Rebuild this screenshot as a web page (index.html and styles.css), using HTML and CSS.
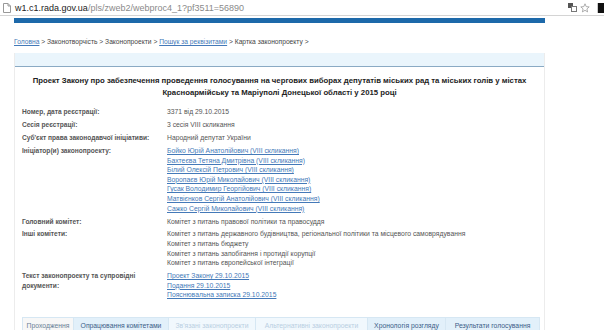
FILE: index.html
```html
<!DOCTYPE html>
<html lang="uk">
<head>
    <meta charset="UTF-8">
    <meta name="viewport" content="width=device-width, initial-scale=1.0">
    <title>Картка законопроекту</title>
    <link rel="stylesheet" href="styles.css">
</head>
<body>

    <div class="chrome">
        <svg class="page-icon" width="8" height="10" viewBox="0 0 8 10">
            <path d="M0.5 0.5h4.5l2.5 2.5v6.5h-7z M5 0.5v2.5h2.5" fill="#fff" stroke="#999" stroke-width="1"/>
        </svg>
        <div class="url"><span class="host">w1.c1.rada.gov.ua</span>/pls/zweb2/webproc4_1?pf3511=56890</div>
        <div class="chrome-icons">
            <svg width="9" height="9" viewBox="0 0 9 9">
                <rect x="0" y="0" width="5" height="5" fill="#555"/>
                <rect x="3.5" y="3.5" width="5" height="5" fill="#fff" stroke="#777" stroke-width="1"/>
            </svg>
            <svg width="10" height="10" viewBox="0 0 10 10">
                <path d="M5 0.8l1.2 2.8 3 .3-2.3 2 .7 3-2.6-1.6-2.6 1.6.7-3-2.3-2 3-.3z" fill="none" stroke="#999" stroke-width="0.8"/>
            </svg>
            <div class="ext"></div>
        </div>
    </div>

    <div class="page">
        <div class="topbar"></div>

        <div class="crumbs">
            <a href="#">Головна</a> &gt; Законотворчість &gt; Законопроекти &gt; <a href="#">Пошук за реквізитами</a> &gt; Картка законопроекту &gt;
        </div>

        <div class="panel">
            <div class="panel-head"></div>

            <h1 class="title">Проект Закону про забезпечення проведення голосування на чергових виборах депутатів міських рад та міських голів у містах Красноармійську та Маріуполі Донецької області у 2015 році</h1>

            <div class="rows">
                <div class="label">Номер, дата реєстрації:</div>
                <div class="value">3371 від 29.10.2015</div>

                <div class="label">Сесія реєстрації:</div>
                <div class="value">3 сесія VIII скликання</div>

                <div class="label">Суб'єкт права законодавчої ініціативи:</div>
                <div class="value">Народний депутат України</div>

                <div class="label">Ініціатор(и) законопроекту:</div>
                <div class="value">
                    <a href="#">Бойко Юрій Анатолійович (VIII скликання)</a><br>
                    <a href="#">Бахтеєва Тетяна Дмитрівна (VIII скликання)</a><br>
                    <a href="#">Білий Олексій Петрович (VIII скликання)</a><br>
                    <a href="#">Воропаєв Юрій Миколайович (VIII скликання)</a><br>
                    <a href="#">Гусак Володимир Георгійович (VIII скликання)</a><br>
                    <a href="#">Матвієнков Сергій Анатолійович (VIII скликання)</a><br>
                    <a href="#">Сажко Сергій Миколайович (VIII скликання)</a>
                </div>

                <div class="label">Головний комітет:</div>
                <div class="value">Комітет з питань правової політики та правосуддя</div>

                <div class="label">Інші комітети:</div>
                <div class="value">
                    Комітет з питань державного будівництва, регіональної політики та місцевого самоврядування<br>
                    Комітет з питань бюджету<br>
                    Комітет з питань запобігання і протидії корупції<br>
                    Комітет з питань європейської інтеграції
                </div>

                <div class="label">Текст законопроекту та супровідні<br>документи:</div>
                <div class="value">
                    <a href="#">Проект Закону 29.10.2015</a><br>
                    <a href="#">Подання 29.10.2015</a><br>
                    <a href="#">Пояснювальна записка 29.10.2015</a>
                </div>
            </div>

            <div class="tabs">
                <div class="tab current">Проходження</div>
                <div class="tab">Опрацювання комітетами</div>
                <div class="tab off">Зв'язані законопроекти</div>
                <div class="tab off">Альтернативні законопроекти</div>
                <div class="tab">Хронологія розгляду</div>
                <div class="tab">Результати голосування</div>
            </div>
        </div>
    </div>

</body>
</html>
```

FILE: styles.css
```css
body {
    margin: 0;
    background-color: #fff;
    font-family: "Liberation Sans", Arial, sans-serif;
    color: #444;
    overflow: hidden;
}
a {
    color: #4479b8;
}
.chrome {
    display: flex;
    align-items: center;
    height: 15px;
    border-bottom: 1px solid #d4d4d4;
    background-color: #fff;
}
.page-icon {
    margin-left: 3px;
    margin-right: 4px;
}
.url {
    font-size: 9px;
    color: #8a8a8a;
    flex: 1;
    white-space: nowrap;
}
.url .host {
    color: #222;
}
.chrome-icons {
    display: flex;
    align-items: center;
    gap: 3px;
    height: 100%;
}
.ext {
    width: 6px;
    height: 10px;
    margin-left: 4px;
    background-color: #111;
    border-left: 1px solid #ccc;
}
.page {
    width: 531px;
    margin-left: 14px;
}
.topbar {
    height: 5px;
    margin-top: 2px;
    background-color: #1d69aa;
}
.crumbs {
    font-size: 6.7px;
    padding: 15px 0 8px;
    color: #444;
}
.panel {
    border-left: 1px solid #ececec;
    border-right: 1px solid #ececec;
    height: 400px;
}
.panel-head {
    height: 13px;
    background-color: #eaf5fc;
    border-bottom: 1px solid #8aaac4;
}
.title {
    font-size: 7.75px;
    font-weight: bold;
    line-height: 12px;
    text-align: center;
    color: #222;
    margin: 8px 8px 8px;
}
.rows {
    display: grid;
    grid-template-columns: 145px 1fr;
    row-gap: 3.4px;
    padding-left: 7px;
    font-size: 6.8px;
    line-height: 9.6px;
}
.label {
    font-weight: bold;
    font-size: 6.6px;
    color: #555;
}
.value {
    color: #555;
}
.tabs {
    display: grid;
    grid-template-columns: 52px 95px 87px 112px 78px 94px;
    margin: 17px 0 0 7px;
}
.tab {
    font-size: 6.8px;
    height: 16px;
    padding-top: 4px;
    box-sizing: border-box;
    text-align: center;
    white-space: nowrap;
    background-color: #e2f0fa;
    color: #3c5d88;
    border: 1px solid #d6e7f3;
    border-left: none;
}
.tab.current {
    background-color: #f7f7f7;
    color: #6a7f96;
    border-left: 1px solid #d6e7f3;
}
.tab.off {
    background-color: #f1f8fd;
    color: #b9cfe2;
}
```
